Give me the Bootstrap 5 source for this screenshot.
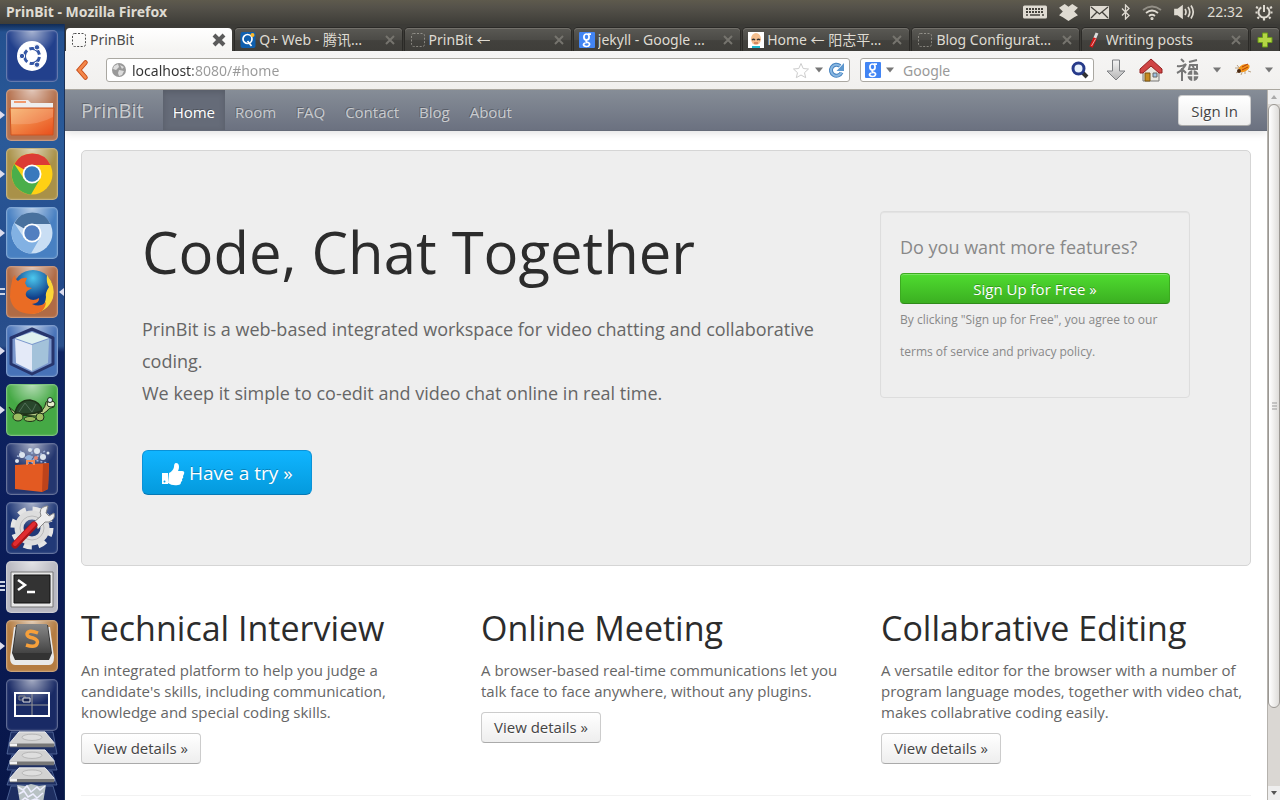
<!DOCTYPE html>
<html lang="en">
<head>
<meta charset="utf-8">
<meta name="viewport" content="width=device-width, initial-scale=1">
<title>PrinBit</title>
<link rel="stylesheet" href="https://cdn.jsdelivr.net/npm/bootstrap@5.3.0/dist/css/bootstrap.min.css">
<style>
body{font-family:"Open Sans","Noto Sans CJK SC",sans-serif;font-size:15px;line-height:21px;color:#666;background:#fff}
svg{display:block;flex:none}
button{font-family:inherit}
.bare{border:0;background:none;padding:0;color:inherit;flex:none}
/* desktop panel */
.panel{height:24px;padding:0 7px 0 6px;background:linear-gradient(#5e5a4d,#55524a 30%,#3e3d38);color:#dfdbd2;font-size:14px;line-height:24px;font-family:"Noto Sans","Open Sans",sans-serif}
.tray{gap:12px}
/* launcher */
.launcher{width:65px;flex:none;background:linear-gradient(#102b55,#245190 8px,#2a5a99 120px,#23498a 260px,#2a508c 322px,#0e2462 328px,#0b1d5a 500px,#081648);border-right:1px solid #1b3157;padding:6px 6px 0;gap:7px}
.tile{position:relative;width:52px;height:52px;border-radius:5px;border:1px solid rgba(255,255,255,.3);flex:none;box-shadow:inset 0 0 2px rgba(255,255,255,.3)}
.tile svg{width:50px;height:50px}
.tile::before{content:"";position:absolute;inset:0 0 50% 0;border-radius:4px;background:radial-gradient(ellipse at 50% 0,rgba(255,255,255,.6),rgba(255,255,255,0) 70%)}
.tile svg{position:relative}
.run::after,.focused i{content:"";position:absolute;left:-7px;top:21px;border:4px solid transparent;border-left:5px solid #dde;border-right:0}
.two::after,.three::after{content:"";position:absolute;left:-7px;top:21px;width:5px;height:7px;border:solid #cdd3e3;border-width:2px 0}
.three::after{top:19px;height:10px;background:linear-gradient(transparent 2px,#cdd3e3 2px,#cdd3e3 4px,transparent 4px)}
.focused i{left:auto;right:-7px;border:4px solid transparent;border-right:5px solid #dde;border-left:0}
/* browser tabs */
.tabs{height:27px;gap:3px;padding:4px 1px 0;background:#3c3b37;font-family:"Noto Sans","Noto Sans CJK SC",sans-serif;font-size:14px;line-height:23px}
.tab-item{flex:1 1 0;min-width:0;height:23px;border-radius:4px 4px 0 0;background:linear-gradient(#5a5954,#4c4b47 50%,#42413d 55%,#3f3e3a);box-shadow:0 0 0 1px #2b2a27,inset 0 1px #73716b;color:#dfdbd2;padding:0 6px 0 5px}
.tab-item.on{background:linear-gradient(#fff,#f5f4f2);color:#4c4c4c;box-shadow:none}
.tab-item a{color:inherit;gap:3px;text-decoration:none;min-width:0}
.tab-item .shut{color:#76746e}
.add-tab{flex:0 0 28px;padding:3px 6px}
/* toolbar */
.tools{height:39px;background:linear-gradient(#f6f5f4,#f1f0ee);border-bottom:1px solid #aaa79f;padding:7px 7px 7px 10px}
.field{height:24px;border:1px solid #aaa8a2;border-radius:3px;background:#fff;padding:0 4px;gap:5px}
.field input{border:0;outline:0;padding:0;min-width:0;background:none;font-family:"Noto Sans",sans-serif;font-size:14px;height:22px}
.address{color:#999;-webkit-text-fill-color:transparent;background:linear-gradient(90deg,#333 61px,#999 61px) !important;-webkit-background-clip:text !important;background-clip:text !important}
.find{width:234px;flex:none;margin-left:10px}
.find input::placeholder{color:#999;opacity:1}
.extras{gap:13px;margin-left:12px}
/* page */
.site-nav{height:41px;padding:0 16px;background:linear-gradient(#868d97,#6b7180);border-bottom:1px solid #656b78;box-shadow:0 2px 8px rgba(0,0,0,.12);text-shadow:-1px -1px 0 rgba(0,0,0,.25);color:#c9cbce}
.site-nav .logo{font-size:20px;line-height:42px;margin-right:19px;color:inherit;text-decoration:none}
.site-nav .nav-link{padding:12px 10px 7px;line-height:21px;color:inherit}
.site-nav .nav-link.active{color:#fff;background:#656b78;box-shadow:inset 0 2px 6px rgba(0,0,0,.15)}
.soft{font-size:15px;line-height:21px;padding:5px 12px 3px;border:1px solid #ccc;border-bottom-color:#aaa;border-radius:4px;background:linear-gradient(#fff,#eee);color:#444;text-shadow:0 1px 1px #fff}
.features .soft{padding:4px 12px}
.page{padding:19px 16px 0}
.hero{background:#eee;border:1px solid #d5d5d5;border-radius:5px;padding:60px 60px 70px;font-size:18px;line-height:32px;margin-bottom:42px;gap:30px}
.hero h1{font-size:58px;line-height:82px;margin:0 0 20px;color:#2c2c2c;font-weight:400}
.hero p{margin-bottom:41px}
.offer{width:310px;flex:none;border:1px solid #ddd;border-radius:4px;padding:19px 19px 29px;box-shadow:inset 0 1px 1px rgba(0,0,0,.05);color:#888}
.offer h2{font-size:18px;line-height:32px;font-weight:400;margin-bottom:10px}
.offer .terms{font-size:12px;line-height:32px;margin:0}
.signup{font-size:15px;line-height:21px;padding:5px 5px 3px;border:1px solid #3cab20;border-bottom-color:#2f8a1a;border-radius:4px;color:#fff;background:linear-gradient(#4fdb30,#3bb021);box-shadow:inset 0 1px rgba(255,255,255,.25);text-shadow:0 -1px rgba(0,0,0,.25)}
.try{font-size:19px;line-height:27px;padding:9px 18px 7px;border:1px solid #0a92d8;border-bottom-color:#0679b5;border-radius:6px;color:#fff;background:linear-gradient(#10b5ff,#049add);text-shadow:0 -1px rgba(0,0,0,.25);gap:4px}
.features{--bs-gutter-x:30px}
.features h2{font-size:34px;line-height:40px;margin-bottom:12px;color:#2c2c2c;font-weight:400}
.features p{margin-bottom:10px}
.page hr{margin:31px 0;border-color:#ccc}
.bar{width:13px;flex:none;background:#dad7d3;border-left:1px solid #b5b2ad}
.bar .cap{height:14px;background:#eee}
.bar .thumb{flex:0 0 85%;border:1px solid #9b9893;border-radius:6px;background:linear-gradient(90deg,#fff,#dedcd9)}
</style>
</head>
<body>
<svg width="0" height="0" class="position-absolute">
<defs>
<linearGradient id="orange" x2="1" y2="1"><stop stop-color="#f7b168"/><stop offset="1" stop-color="#e94e1b"/></linearGradient>
<linearGradient id="steel" y2="1" x2="0"><stop stop-color="#f4f4f4"/><stop offset="1" stop-color="#b5b5b5"/></linearGradient>
<linearGradient id="key" y2="1" x2="0"><stop stop-color="#888"/><stop offset="1" stop-color="#444"/></linearGradient>
<radialGradient id="globe" cx=".5" cy=".2"><stop stop-color="#4cc8ee"/><stop offset="1" stop-color="#103f8a"/></radialGradient>
<symbol id="x" viewBox="0 0 12 12"><path d="M2 2l8 8M10 2l-8 8" stroke="currentColor" stroke-width="2"/></symbol>
<symbol id="blank" viewBox="0 0 16 16"><rect x="1.500" y="1.500" width="13" height="13" rx="2" fill="none" stroke="currentColor" stroke-dasharray="2 1.500"/></symbol>
<symbol id="g" viewBox="0 0 16 16"><rect width="16" height="16" rx="1" fill="#4285f4"/><g fill="none" stroke="#fff" stroke-width="1.700"><ellipse cx="7.500" cy="5" rx="2.600" ry="3"/><path d="M9 2.200h3M8 8q-2 1 0 2 3 1 2.500 2.700Q10 14.500 7.500 14.500 4.500 14.300 4.500 12.500 5 10.500 8.500 10.500"/></g></symbol>
<symbol id="drop" viewBox="0 0 8 6"><path d="M0 .5h8L4 5.500z" fill="#777"/></symbol>
<symbol id="disk" viewBox="0 0 50 20" preserveAspectRatio="none"><path d="M12 1h26l9 12v4H3v-4z" fill="#d2d2d2" stroke="#f3f3f3"/><path d="M3 14h44v4H3z" fill="#777"/><path d="M3 14h7v3H3z" fill="#f4f4f4"/><ellipse cx="25" cy="7" rx="10" ry="3.500" fill="#dedede" stroke="#b5b5b5"/></symbol>
</defs>
</svg>
<div class="d-flex flex-column vh-100 overflow-hidden">
<header class="panel d-flex align-items-center flex-shrink-0">
  <strong class="me-auto">PrinBit - Mozilla Firefox</strong>
  <div class="tray d-flex align-items-center">
    <svg width="24" height="14" viewBox="0 0 24 14"><rect width="24" height="13" y=".5" rx="1.500" fill="#dfdbd2"/><path d="M3 4h18M3 7h18" stroke="#44423c" stroke-width="2" stroke-dasharray="2 1"/><path d="M3 10h2M7 10h10M19 10h2" stroke="#44423c" stroke-width="1.600"/></svg>
    <svg width="19" height="17" viewBox="0 0 20 18" fill="#dfdbd2"><path d="M6 0l4 3 4-3 6 4-4 4 4 4-4 2-6 4-6-4-4-2 4-4-4-4z"/></svg>
    <svg width="19" height="13" viewBox="0 0 19 13"><rect width="19" height="13" rx="1" fill="#dfdbd2"/><path d="M1 1l8.500 7L18 1M1 12l6-6M18 12l-6-6" fill="none" stroke="#44423c" stroke-width="1.300"/></svg>
    <svg width="9" height="16" viewBox="0 0 9 16"><path d="M1 4.500l7 7-3.500 3.500V1L8 4.500l-7 7" fill="none" stroke="#dfdbd2" stroke-width="1.300"/></svg>
    <svg width="20" height="15" viewBox="0 0 20 15" fill="none" stroke="#dfdbd2" stroke-width="1.800"><path d="M1 5q9-7 18 0" opacity=".45"/><path d="M4 8q6-5 12 0M7 11q3-2.500 6 0"/><circle cx="10" cy="13.500" r=".7"/></svg>
    <svg width="21" height="16" viewBox="0 0 21 16" fill="none" stroke="#dfdbd2" stroke-width="1.700"><path d="M1 5.500h3l4-3v11l-4-3H1z" fill="#dfdbd2"/><path d="M11 5q2 3 0 6M14 3q3.500 5 0 10M17 1.500q4.500 6.500 0 13"/></svg>
    <span>22:32</span>
    <svg width="18" height="18" viewBox="0 0 18 18" fill="none" stroke="#dfdbd2"><path d="M6.300 4.300a5.500 5.500 0 1 0 5.400 0" stroke-width="2"/><path d="M9 2v7" stroke-width="2"/><path d="M3 5L1 4M2.500 9.500H.500M4 14l-1.500 1.500M9 15v2.500M14 14l1.500 1.500M15.500 9.500h2M15 5l2-1" stroke-width="2.200"/></svg>
  </div>
</header>
<div class="d-flex flex-grow-1 overflow-hidden">
<nav class="launcher d-flex flex-column" aria-label="Launcher">
  <button class="bare tile" aria-label="Dash" style="background:#22408c"><svg viewBox="0 0 50 50"><circle cx="25" cy="25" r="15" fill="#fff"/><circle cx="25" cy="25" r="7.500" fill="none" stroke="#3557a5" stroke-width="3" stroke-dasharray="13 2.700" transform="rotate(8 25 25)"/><g fill="#3557a5" stroke="#fff"><circle cx="15" cy="25" r="2.700"/><circle cx="30" cy="16.300" r="2.700"/><circle cx="30" cy="33.700" r="2.700"/></g></svg></button>
  <button class="bare tile run" aria-label="Files" style="background:#b5714e"><svg viewBox="0 0 50 50"><path d="M4 10h17l3 3h22v9H4z" fill="#eee"/><path d="M7 12h12" stroke="#f19a6d" stroke-width="2"/><path d="M3 18h44l-1 27H4z" fill="url(#orange)" stroke="#cf5420"/><path d="M4 19h42v8Q30 36 4 34z" fill="#fff" opacity=".15"/></svg></button>
  <button class="bare tile run" aria-label="Chrome" style="background:#a99148"><svg viewBox="0 0 50 50"><circle cx="25" cy="25" r="20.500" fill="#ffd014"/><path d="M25 25L7.300 15A20.500 20.500 0 0 1 43.500 16H25z" fill="#dc3b35"/><path d="M7.300 15A20.500 20.500 0 0 0 24 45.500L33 30 17 30z" fill="#4bae4a"/><circle cx="25" cy="25" r="9.500" fill="#fff"/><circle cx="25" cy="25" r="7.700" fill="#3979bd"/></svg></button>
  <button class="bare tile run" aria-label="Chromium" style="background:#4880c2"><svg viewBox="0 0 50 50"><circle cx="25" cy="25" r="20.500" fill="#c9def4"/><path d="M25 25L7.300 15A20.500 20.500 0 0 1 43.500 16H25z" fill="#48719e"/><path d="M7.300 15A20.500 20.500 0 0 0 24 45.500L33 30 17 30z" fill="#82b1e3"/><circle cx="25" cy="25" r="9.500" fill="#fff"/><circle cx="25" cy="25" r="7.700" fill="#527fc0"/></svg></button>
  <button class="bare tile two focused" aria-label="Firefox" style="background:#b06b45"><i></i><svg viewBox="0 0 50 50"><circle cx="26" cy="23" r="20" fill="url(#globe)"/><path d="M40 8q9 11 6 23-5 14-22 16 14-4 15-17-1-4 3-10-3-4-2-12z" fill="#fbd638"/><path d="M5 14q0-3 3-6 0 4 3 6 4-4 9-3l-2 5 2 4 5 1-5 3q-3 4 1 7 5 4 11 0 1 5-7 6 8 4 14-2-1 12-15 12-19-1-21-17 0-9 2-16z" fill="#ea6c24"/></svg></button>
  <button class="bare tile run" aria-label="VirtualBox" style="background:#4772b8"><svg viewBox="0 0 50 50"><path d="M25 3l21 9v26L25 48 4 38V12z" fill="#7a96cc" stroke="#27356d" stroke-width="3" stroke-linejoin="round"/><path d="M25 6l17 6-17 6-17-6z" fill="#dff1f0"/><path d="M8 13l17 6v26L9 37z" fill="#e4eaf8"/><path d="M42 13l-17 6v26l16-8z" fill="#a3c2da"/></svg></button>
  <button class="bare tile run" aria-label="Turtle" style="background:#45a945"><svg viewBox="0 0 50 50" stroke="#1e3118"><path d="M2 22q6 7 14 8l18-3q5-6 5-10l4-2 4 2v5q-6 1-7 4-4 4-10 5l-22-1Q5 28 2 22z" fill="#b9cf87"/><path d="M8 28Q11 15 23 15q11 2 12 11-14 5-27 2z" fill="#29472c" stroke-width="1.500"/><path d="M12 27l6-9 7 9 4-8" fill="none" stroke="#526f58"/><g fill="#9bbb60"><ellipse cx="11" cy="32" rx="5" ry="4"/><ellipse cx="23" cy="34" rx="6" ry="2.500"/><ellipse cx="33" cy="32" rx="4" ry="4"/></g><ellipse cx="44" cy="19" rx="4" ry="3" fill="#e8eecb"/><circle cx="43" cy="15" r="2.500" fill="#dce8f4"/></svg></button>
  <button class="bare tile" aria-label="Software Center" style="background:#24366f"><svg viewBox="0 0 50 50"><path d="M10 12l30 7M13 7l15 14M38 7L20 20M25 4v16" stroke="#9fb2d8" stroke-width="1.500" stroke-dasharray="2 2"/><g fill="#dce4ee"><circle cx="15" cy="11" r="3"/><circle cx="23" cy="6" r="2"/><circle cx="30" cy="7" r="3"/><circle cx="36" cy="13" r="3"/><circle cx="10" cy="17" r="2"/><circle cx="41" cy="9" r="1.500"/><circle cx="22" cy="14" r="3" fill="#92b3dd"/><circle cx="29" cy="14" r="2" fill="#e48672"/></g><path d="M8 21l34-2-1 26-6 3-27-3z" fill="#e35a22"/><path d="M36 20l6-1-1 26-6 3z" fill="#bd431b"/><path d="M20 21v-4h7v4" fill="none" stroke="#f58a50" stroke-width="2"/></svg></button>
  <button class="bare tile" aria-label="Settings" style="background:#213977"><svg viewBox="0 0 50 50"><circle cx="25" cy="25" r="18.500" fill="none" stroke="#e5e5e5" stroke-width="6" stroke-dasharray="8 6.530"/><circle cx="25" cy="25" r="13" fill="none" stroke="#ddd" stroke-width="9"/><circle cx="25" cy="25" r="12" fill="none" stroke="#bbb"/><path d="M27 19l7-6q-3-8 5-10l2 0-2 7 3 3 5-3q2 6-5 9l-4 0-7 7z" fill="#eee" stroke="#888"/><path d="M8 42l19-20" stroke="#a81519" stroke-width="7" stroke-linecap="round"/><path d="M8 41l19-20" stroke="#e02c30" stroke-width="4" stroke-linecap="round"/></svg></button>
  <button class="bare tile three" aria-label="Terminal" style="background:#b8b8c0"><svg viewBox="0 0 50 50"><path d="M4 10h42v35H4z" fill="#e8e8e8" stroke="#777"/><path d="M7 13h36v28H7z" fill="#333" stroke="#111"/><path d="M11 18l7 5-7 5M20 30h8" stroke="#fff" stroke-width="2.500" fill="none"/></svg></button>
  <button class="bare tile run" aria-label="Sublime Text" style="background:#b47c42"><svg viewBox="0 0 50 50"><path d="M7 6h36l4 30q0 8-5 8H8q-5 0-5-8z" fill="#e9e9e9"/><path d="M9 4h32l4 28-3 7H8l-3-7z" fill="#333"/><path d="M10 3h30l4 29H6z" fill="url(#key)"/><path d="M31 12q-10-4-11 1 0 3 6 4 6 2 4 6-2 4-11 1" stroke="#f6a03b" stroke-width="3.500" fill="none"/></svg></button>
  <button class="bare tile" aria-label="Workspaces" style="background:#192a65"><svg viewBox="0 0 50 50"><path d="M25 13v24M8 25h34" stroke="#999"/><path d="M8 13h34v23H8z" stroke="#fff" fill="none" stroke-width="2"/><path d="M12 16h6v4h-6z" fill="none" stroke="#888"/><path d="M16 18h7v4h-7z" fill="#162250" stroke="#ddd"/></svg></button>
  <svg width="52" height="72" viewBox="0 0 52 72" style="margin-top:-7px"><g fill="#6179ad" fill-opacity=".25" stroke="#6179ad" stroke-opacity=".7"><path d="M5 1h42l4 22H1zM6 24h40l5 15H1zM6 40h40l5 14H1zM5 55h42l5 17H0z"/></g><use href="#disk" width="50" height="18" x="1"/><use href="#disk" width="50" height="18" x="1" y="18"/><use href="#disk" width="50" height="17" x="1" y="36"/><path d="M11 54l8 1 6-2 8 2 7-1-3 18H14z" fill="#b9c2c5"/><path d="M12 56l5 3 4-4 4 6 6-5 3 3 5-4M13 63l5-3 4 6 5-3 4 4 6-5M15 70l4-3 5 3 5-2 6 2" stroke="#eef" stroke-width="1.500" fill="none"/></svg>
</nav>
<div class="d-flex flex-column flex-grow-1 overflow-hidden">
  <div class="tabs d-flex flex-shrink-0">
    <div class="tab-item on d-flex align-items-center"><a href="#home" class="d-flex align-items-center flex-grow-1"><svg width="16" height="16"><use href="#blank"/></svg><span class="text-truncate">PrinBit</span></a><button class="bare" aria-label="Close tab"><svg width="14" height="14" viewBox="0 0 14 14"><path d="M2 2l10 10M12 2L2 12" stroke="#5b5b5b" stroke-width="4"/></svg></button></div>
    <div class="tab-item d-flex align-items-center"><a href="#q" class="d-flex align-items-center flex-grow-1"><svg width="16" height="16" viewBox="0 0 15 16"><rect width="15" height="16" rx="2" fill="#0f5fae"/><circle cx="7" cy="7" r="4.500" fill="none" stroke="#fff" stroke-width="1.700"/><path d="M7 9l4 5" stroke="#fff" stroke-width="1.700"/><circle cx="12" cy="3" r="2" fill="#fbb829"/></svg><span class="text-truncate">Q+ Web - 腾讯…</span></a><button class="bare shut" aria-label="Close tab"><svg width="12" height="12"><use href="#x"/></svg></button></div>
    <div class="tab-item d-flex align-items-center"><a href="#p" class="d-flex align-items-center flex-grow-1"><svg width="16" height="16" opacity=".45"><use href="#blank"/></svg><span class="text-truncate">PrinBit ←</span></a><button class="bare shut" aria-label="Close tab"><svg width="12" height="12"><use href="#x"/></svg></button></div>
    <div class="tab-item d-flex align-items-center"><a href="#g" class="d-flex align-items-center flex-grow-1"><svg width="16" height="16"><use href="#g"/></svg><span class="text-truncate">jekyll - Google …</span></a><button class="bare shut" aria-label="Close tab"><svg width="12" height="12"><use href="#x"/></svg></button></div>
    <div class="tab-item d-flex align-items-center"><a href="#y" class="d-flex align-items-center flex-grow-1"><svg width="16" height="16" viewBox="0 0 16 16"><path fill="#fff" d="M0 0h16v16H0z"/><ellipse cx="8" cy="7" rx="5" ry="6" fill="#f5bf8f"/><path d="M4 8q1.500-1.500 3 0M9 8q1.500-1.500 3 0" stroke="#333" stroke-width="1.300" fill="none"/><path d="M6 11h4" stroke="#b65235"/><path d="M4 14h8v2H4z" fill="#20b9cf"/></svg><span class="text-truncate">Home ← 阳志平…</span></a><button class="bare shut" aria-label="Close tab"><svg width="12" height="12"><use href="#x"/></svg></button></div>
    <div class="tab-item d-flex align-items-center"><a href="#b" class="d-flex align-items-center flex-grow-1"><svg width="16" height="16" opacity=".45"><use href="#blank"/></svg><span class="text-truncate">Blog Configurat…</span></a><button class="bare shut" aria-label="Close tab"><svg width="12" height="12"><use href="#x"/></svg></button></div>
    <div class="tab-item d-flex align-items-center"><a href="#w" class="d-flex align-items-center flex-grow-1"><svg width="16" height="16" viewBox="0 0 14 16"><path d="M9 1l-3 7" stroke="#ddd" stroke-width="3"/><path d="M7 6l-4 9" stroke="#d21717" stroke-width="3.500"/><path d="M7.500 7l-4 7" stroke="#fff" stroke-width=".6"/></svg><span class="text-truncate">Writing posts</span></a><button class="bare shut" aria-label="Close tab"><svg width="12" height="12"><use href="#x"/></svg></button></div>
    <button class="bare tab-item add-tab" aria-label="New tab"><svg width="16" height="16" viewBox="0 0 16 16"><path d="M5.500 1h5v4.500H15v5h-4.500V15h-5v-4.500H1v-5h4.500z" fill="#b4d545" stroke="#6b9a1b"/></svg></button>
  </div>
  <div class="tools d-flex align-items-center flex-shrink-0">
    <button class="bare me-3" aria-label="Back"><svg width="15" height="22" viewBox="0 0 15 22"><path d="M10.500 3.500L4 11l6.500 7.500" fill="none" stroke="#c44a16" stroke-width="4.500" stroke-linecap="round"/><path d="M10.500 3.500L4 11l6.500 7.500" fill="none" stroke="#f4874a" stroke-width="2.700" stroke-linecap="round"/></svg></button>
    <div class="field d-flex align-items-center flex-grow-1">
      <svg width="16" height="16" viewBox="0 0 16 16"><circle cx="8" cy="8" r="7" fill="#999"/><path d="M3 4l4-2 1 3-3 3-3-1zM9 3l4 2-2 2zM8 8l5 1-2 4-3 1-1-3z" fill="#ddd"/></svg>
      <input class="address flex-grow-1" aria-label="Address" value="localhost:8080/#home">
      <svg width="18" height="17" viewBox="0 0 18 17"><path d="M9 1.500l2.200 5 5.300.5-4 3.700 1.200 5L9 13l-4.700 2.700 1.200-5-4-3.700 5.300-.5z" fill="#fff" stroke="#ccc"/></svg>
      <svg width="8" height="6"><use href="#drop"/></svg>
      <button class="bare" aria-label="Reload"><svg width="17" height="17" viewBox="0 0 17 17"><path d="M13.500 10.500A5.500 5.500 0 1 1 12 4" fill="none" stroke="#4582bf" stroke-width="4"/><path d="M13.500 10.500A5.500 5.500 0 1 1 12 4" fill="none" stroke="#8ab8e2" stroke-width="2"/><path d="M16 1v8H8.500z" fill="#5d97ce"/></svg></button>
    </div>
    <div class="field find d-flex align-items-center">
      <svg width="16" height="16"><use href="#g"/></svg><svg width="8" height="6"><use href="#drop"/></svg>
      <input class="flex-grow-1 ms-1" aria-label="Search" placeholder="Google">
      <button class="bare" aria-label="Search"><svg width="18" height="18" viewBox="0 0 18 18"><path d="M11 11l5 5" stroke="#333" stroke-width="4"/><circle cx="7.500" cy="7.500" r="5.500" fill="#e9f2fc" stroke="#263a8a" stroke-width="3"/></svg></button>
    </div>
    <div class="extras d-flex align-items-center">
      <button class="bare" aria-label="Downloads"><svg width="20" height="22" viewBox="0 0 20 22"><path d="M6.500 1h7v11H19l-9 9-9-9h5.500z" fill="url(#steel)" stroke="#7c7f82"/></svg></button>
      <button class="bare" aria-label="Home page"><svg width="24" height="24" viewBox="0 0 24 24"><path d="M4 12h16v11H4z" fill="#e9e8e0" stroke="#777"/><path d="M12 3l9 8v2H3v-2z" fill="#e9e8e0"/><path d="M6 15h5v8H6z" fill="#c78b22" stroke="#7b5613"/><path d="M14 15h4v4h-4z" fill="#9fc4e3" stroke="#666"/><path d="M12 1L1 11v4h3l8-7 8 7h3v-4z" fill="#d04545" stroke="#932020"/></svg></button>
      <button class="bare" aria-label="Fortune"><svg width="24" height="24" viewBox="0 0 24 24" fill="none" stroke="#777" stroke-width="2"><path d="M5 1l3 3M1 8q5 1 9-2-3 6-9 9M6 10v13M7 12l3 3M13 4l8-2M14 7h7v4h-8zM16 7l2 3"/><circle cx="17" cy="17.500" r="5.500" fill="#777" stroke="none"/><path d="M17 12v11M11 17.500h12" stroke="#f3f2f0" stroke-width="1.500"/></svg></button>
      <svg width="8" height="6"><use href="#drop"/></svg>
      <button class="bare" aria-label="Firebug"><svg width="18" height="16" viewBox="0 0 18 16"><path d="M3 3l4 5-5 3M7 13l2-5M11 12V8M14 9l3 1M5 6L1 6" stroke="#b9a284" fill="none"/><ellipse cx="10" cy="6" rx="6" ry="3.500" transform="rotate(-25 10 6)" fill="#f39418"/><path d="M8 5l6-3M8 8l6-3" stroke="#b23b0b"/><circle cx="5" cy="9" r="2" fill="#4b2b12"/></svg></button>
      <svg width="8" height="6"><use href="#drop"/></svg>
    </div>
  </div>
  <div class="d-flex flex-grow-1 overflow-hidden">
    <div class="flex-grow-1 overflow-hidden">
      <nav class="site-nav d-flex align-items-start">
        <a class="logo" href="#home">PrinBit</a>
        <div class="nav flex-nowrap me-auto"><a class="nav-link active" href="#home">Home</a><a class="nav-link" href="#room">Room</a><a class="nav-link" href="#faq">FAQ</a><a class="nav-link" href="#contact">Contact</a><a class="nav-link" href="#blog">Blog</a><a class="nav-link" href="#about">About</a></div>
        <button class="btn soft align-self-center">Sign In</button>
      </nav>
      <main class="page">
        <section class="hero d-flex align-items-start">
          <div class="flex-grow-1">
            <h1>Code, Chat Together</h1>
            <p>PrinBit is a web-based integrated workspace for video chatting and collaborative coding.<br>We keep it simple to co-edit and video chat online in real time.</p>
            <button class="btn try d-flex align-items-center"><svg width="24" height="24" viewBox="0 0 24 24" fill="#fff"><path d="M1 11h6v11H1z"/><circle cx="3.500" cy="19.500" r="1" fill="#08a4ea"/><path d="M8 11q4-2 5-6 0-4 2-4 3 0 3 4 0 2-1 4h4q3 0 2 3l-1 2q1 2-1 3 1 2-1 3 0 3-3 3-6 1-10-2z"/></svg>Have a try »</button>
          </div>
          <aside class="offer">
            <h2>Do you want more features?</h2>
            <button class="btn signup w-100 d-block">Sign Up for Free »</button>
            <p class="terms">By clicking "Sign up for Free", you agree to our terms of service and privacy policy.</p>
          </aside>
        </section>
        <div class="row features">
          <section class="col-4"><h2>Technical Interview</h2><p>An integrated platform to help you judge a candidate's skills, including communication, knowledge and special coding skills.</p><button class="btn soft">View details »</button></section>
          <section class="col-4"><h2>Online Meeting</h2><p>A browser-based real-time communications let you talk face to face anywhere, without any plugins.</p><button class="btn soft">View details »</button></section>
          <section class="col-4"><h2>Collabrative Editing</h2><p>A versatile editor for the browser with a number of program language modes, together with video chat, makes collabrative coding easily.</p><button class="btn soft">View details »</button></section>
        </div>
        <hr>
      </main>
    </div>
    <div class="bar d-flex flex-column" aria-hidden="true">
      <div class="cap d-flex align-items-center justify-content-center"><svg width="6" height="4" viewBox="0 0 6 4"><path d="M0 4h6L3 0z" fill="#aaa"/></svg></div>
      <div class="thumb d-flex align-items-center justify-content-center"><svg width="5" height="8" viewBox="0 0 5 8"><path d="M0 1h5M0 4h5M0 7h5" stroke="#999"/></svg></div>
      <div class="cap mt-auto d-flex align-items-center justify-content-center"><svg width="6" height="4" viewBox="0 0 6 4"><path d="M0 0h6L3 4z" fill="#555"/></svg></div>
    </div>
  </div>
</div>
</div>
</div>
<script src="https://cdn.jsdelivr.net/npm/bootstrap@5.3.0/dist/js/bootstrap.bundle.min.js"></script>
</body>
</html>
